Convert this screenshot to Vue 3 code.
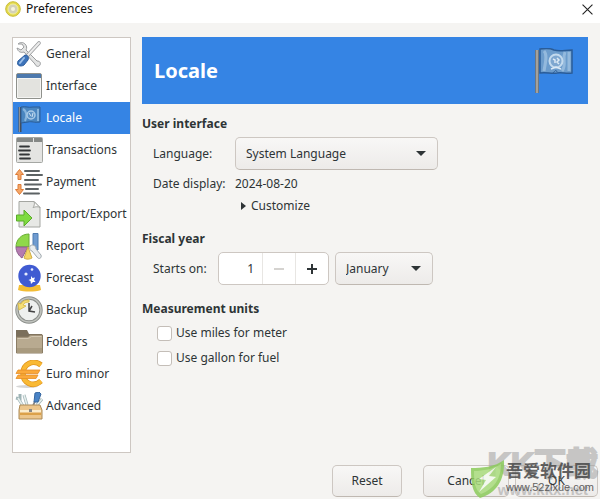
<script setup>
import { ref } from 'vue'

const pages = [
  { id: 'general', label: 'General' },
  { id: 'interface', label: 'Interface' },
  { id: 'locale', label: 'Locale' },
  { id: 'transactions', label: 'Transactions' },
  { id: 'payment', label: 'Payment' },
  { id: 'import', label: 'Import/Export' },
  { id: 'report', label: 'Report' },
  { id: 'forecast', label: 'Forecast' },
  { id: 'backup', label: 'Backup' },
  { id: 'folders', label: 'Folders' },
  { id: 'euro', label: 'Euro minor' },
  { id: 'advanced', label: 'Advanced' }
]

const months = [
  'January', 'February', 'March', 'April', 'May', 'June',
  'July', 'August', 'September', 'October', 'November', 'December'
]

const current = ref('locale')
const language = ref('System Language')
const day = ref(1)
const month = ref('January')
const miles = ref(false)
const gallon = ref(false)
</script>

<template>
  <div class="window">
    <header class="titlebar">
      <svg class="logo" viewBox="0 0 16 16">
        <circle cx="8" cy="8" r="7.3" fill="#e3d94a" stroke="#c9bd3d" />
        <circle cx="8" cy="8" r="5" fill="#d3d1b8" stroke="#f4f09a" />
        <circle cx="8" cy="8" r="2" fill="#f7f5de" />
      </svg>
      <span class="title">Preferences</span>
      <button class="close" aria-label="Close">
        <svg viewBox="0 0 10 10"><path d="M.5.5l9 9M9.5.5l-9 9" stroke="#222" fill="none" /></svg>
      </button>
    </header>

    <main class="main">
      <nav class="sidebar">
        <button
          v-for="p in pages"
          :key="p.id"
          class="item"
          :class="{ active: current === p.id }"
          @click="current = p.id"
        >
          <svg class="icon" viewBox="0 0 28 28">
            <g v-if="p.id === 'general'">
              <path d="M3 4c2-2 5-2 7 0s2 4 1 6l11 11c3 0 4 2 3 4s-4 2-5-1L9 12c-3 1-6 0-7-4l4 2 3-3-2-3z" fill="#e3e4e4" stroke="#9a9c9e" />
              <path d="M24 3L12 16" stroke="#9a9c9e" stroke-width="3.6" stroke-linecap="round" />
              <path d="M24 3L12 16" stroke="#ececec" stroke-width="2" stroke-linecap="round" />
              <path d="M10 15c3 0 4 2 3 5l-4 5c-3 2-8 1-6-4z" fill="#3d74bb" stroke="#2f5f9f" />
              <path d="M9 18l-4 5" stroke="#9cc0ea" stroke-width="2" stroke-linecap="round" />
            </g>
            <g v-else-if="p.id === 'interface'">
              <rect x="1.5" y="1.5" width="25" height="25" rx="1.5" fill="#e3e3df" stroke="#8f918c" />
              <path d="M2 2h24v4H2z" fill="#4d79ad" />
              <path d="M2.5 6.5h23v19h-23z" fill="none" stroke="#f4f4f2" />
            </g>
            <g v-else-if="p.id === 'locale'">
              <path d="M5 3v25" stroke="#454e5c" stroke-width="3" />
              <path d="M4.500 3v25" stroke="#8d8f90" />
              <path d="M6 3c5-1 7 1 12 0h7v15c-6 1-8-1-12 0l-7 1z" fill="#4a86c0" stroke="#2b5d97" />
              <path d="M8 5c4 2 4 8 2 12M23 5v12" stroke="#86b4dd" stroke-width="2" fill="none" />
              <circle cx="16" cy="11" r="4" fill="#5c92c6" stroke="#a9cae6" stroke-width="1.5" />
              <path d="M14 9l2 3M18 9l-1 4" stroke="#cfe3f3" />
            </g>
            <g v-else-if="p.id === 'transactions'">
              <rect x="1.5" y="1.5" width="26" height="25" rx="1" fill="#e4e4e2" stroke="#a5a7a3" />
              <path d="M2 2h16v4H2zM19 2h8v4h-8z" fill="#858886" />
              <path d="M5 10.5h9M4 14.500h11M5 18.500h9M5 22.500h10" stroke="#333638" stroke-width="1.8" stroke-linecap="round" />
            </g>
            <g v-else-if="p.id === 'payment'">
              <path d="M4.500 1.500l4 5H6v5H3v-5H.5zM4.500 26.500l4-5H6v-5H3v5H.5z" fill="#f5a768" stroke="#dd7c39" />
              <path d="M10 3h14M12 7h15M10 12h13M10 16.500h16M11 21h12M9 25.500h15" stroke="#5c6264" stroke-width="2" stroke-linecap="round" />
            </g>
            <g v-else-if="p.id === 'import'">
              <path d="M4 1.500h15l6 6V27H4z" fill="#e7e8e5" stroke="#a4a6a1" />
              <path d="M19 1.500c1 2 0 5-1 6 3-1 5-1 7 0z" fill="#fafaf8" stroke="#a4a6a1" />
              <path d="M1.500 15H9v-5l8 8-8 8v-5H1.500z" fill="#7fdb40" stroke="#5cab2c" />
            </g>
            <g v-else-if="p.id === 'report'">
              <path d="M14 15V2C6 2 1 8 1 15z" fill="#8fd84a" stroke="#69ac35" />
              <path d="M13 15H1c0 5 3 9 6 11z" fill="#b57bb0" stroke="#8b5f8b" />
              <path d="M13 15L9 26c3 2 6 1 8 0z" fill="#f4d566" stroke="#cfac45" />
              <path d="M18 1.500h5V18h-5z" fill="#6f9bd0" stroke="#4f7cb2" />
              <path d="M15 14c2-2 6-1 6 3l5 6c1 3-2 5-4 2l-5-6c-2 0-3-3-2-5z" fill="#eaedef" stroke="#a1a9ae" />
            </g>
            <g v-else-if="p.id === 'forecast'">
              <path d="M4 21h21l1 5c-6 2-17 2-23 0z" fill="#f3bd35" />
              <circle cx="14.500" cy="12" r="11.200" fill="#405bd2" />
              <path d="M16 12l1.500 2 2.500-.5-1 2.500 1.500 2H18l-2 2-.5-3-2-1 2.500-1z" fill="#fff" />
              <circle cx="11" cy="10" r="1.600" fill="#e7ecff" />
              <circle cx="17" cy="5.500" r="1.300" fill="#e7ecff" />
            </g>
            <g v-else-if="p.id === 'backup'">
              <circle cx="14" cy="14" r="12" fill="#eef0ee" stroke="#8a8d89" stroke-width="3.400" />
              <circle cx="14" cy="14" r="12" fill="none" stroke="#c0c3be" stroke-width="1.600" />
              <path d="M14 7v8l6 1M14 15l3-5" stroke="#444" stroke-width="1.500" fill="none" />
              <path d="M14 4c-4 0-7 1-8 4L3 7l1 7 7-4-3-1c1-2 3-3 6-3z" fill="#f5de76" stroke="#dcc050" />
            </g>
            <g v-else-if="p.id === 'folders'">
              <path d="M1 2h11l2 4h13v19H1z" fill="#7b6f5b" />
              <path d="M1.500 9h11l3-2h12v18h-26z" fill="#b8aa90" stroke="#8b7d65" />
              <path d="M2.500 10.500h11l3-2h10" stroke="#d2c6b0" fill="none" />
              <path d="M2 20h25v5H2z" fill="#a89a7f" />
            </g>
            <g v-else-if="p.id === 'euro'">
              <ellipse cx="12" cy="26.500" rx="11" ry="1.500" fill="#d6d6d6" />
              <path d="M26 5C18-1 8 4 8 13.500S18 28 26 21" fill="none" stroke="#e0951f" stroke-width="5.500" />
              <path d="M26 5C18-1 8 4 8 13.500S18 28 26 21" fill="none" stroke="#f9b934" stroke-width="4" />
              <path d="M3 10h22l-2 3.500H1zM3 15h20l-2 3.500H1z" fill="#fba93a" stroke="#e58e28" stroke-width=".8" />
            </g>
            <g v-else>
              <path d="M8 14L3 6M5 2v5l-4-1M12 13L9 3M22 13l5-6" stroke="#9fb4b6" stroke-width="3" fill="none" />
              <path d="M8 14L3 6M12 13L9 3M22 13l5-6" stroke="#e6eeec" stroke-width="1.600" />
              <path d="M18 14l2-5" stroke="#888" stroke-width="2" />
              <path d="M20 1l4-1 2 2-3 8h-4z" fill="#4983c6" stroke="#35669f" />
              <path d="M5 13h20l2 5v9H4v-9z" fill="#ecc68c" stroke="#ac8a57" />
              <path d="M5 18h21v2H5z" fill="#fbedce" />
              <path d="M5 21h21v2H5z" fill="#dba14a" />
              <path d="M14 17h3v3h-3z" fill="#888" />
            </g>
          </svg>
          <span>{{ p.label }}</span>
        </button>
      </nav>

      <section class="content">
        <div class="banner">
          <h1>Locale</h1>
          <svg class="flag" viewBox="0 0 40 46">
            <path d="M3 2v43" stroke="#6f777e" stroke-width="4" />
            <path d="M3 2v43" stroke="#a3a19c" stroke-width="2" />
            <path d="M6 1c6-1 10-1 14 1 6 2 11 0 18 0v23c-6 1-10-1-15 0-6 1-10-1-17 0z" fill="#6c9ccc" stroke="#2a5c98" stroke-width="1.500" />
            <path d="M10 3c4 4 1 13 0 20M31 4c-3 7 2 13-3 19M35 4v19" stroke="#a9c9e6" stroke-width="3" opacity=".65" fill="none" />
            <circle cx="22" cy="13" r="6.500" fill="#7ea7d0" stroke="#c3daee" stroke-width="2" />
            <path d="M19 11l2 1v3M23 10l2 2-2 2 2 2M17 21l5-2 5 2" stroke="#dbe9f5" stroke-width="1.500" fill="none" />
            <path d="M19 25c2-2 3-4 4-1" stroke="#2a5c98" fill="none" />
          </svg>
        </div>

        <section class="group">
          <h2>User interface</h2>
          <div class="row">
            <label class="name" for="language">Language:</label>
            <div class="combo wide">
              <select id="language" v-model="language">
                <option>System Language</option>
                <option>English</option>
              </select>
              <svg class="arrow" viewBox="0 0 10 5"><path d="M0 0h10L5 5z" fill="#2e3436" /></svg>
            </div>
          </div>
          <div class="row date">
            <span class="name">Date display:</span>
            <span>2024-08-20</span>
          </div>
          <button class="expander">
            <svg viewBox="0 0 5 8"><path d="M0 0l5 4-5 4z" fill="#2e3436" /></svg>
            Customize
          </button>
        </section>

        <section class="group">
          <h2>Fiscal year</h2>
          <div class="row">
            <label class="name short" for="day">Starts on:</label>
            <div class="spin">
              <input id="day" v-model.number="day" type="text" inputmode="numeric" />
              <button aria-label="Decrease" :disabled="day <= 1" @click="day--">
                <svg viewBox="0 0 10 10"><path d="M0 5h10" stroke="currentColor" stroke-width="2" /></svg>
              </button>
              <button aria-label="Increase" @click="day++">
                <svg viewBox="0 0 10 10"><path d="M0 5h10M5 0v10" stroke="currentColor" stroke-width="2" /></svg>
              </button>
            </div>
            <div class="combo">
              <select v-model="month" aria-label="Month">
                <option v-for="m in months" :key="m">{{ m }}</option>
              </select>
              <svg class="arrow" viewBox="0 0 10 5"><path d="M0 0h10L5 5z" fill="#2e3436" /></svg>
            </div>
          </div>
        </section>

        <section class="group">
          <h2>Measurement units</h2>
          <label class="check"><input v-model="miles" type="checkbox" />Use miles for meter</label>
          <label class="check"><input v-model="gallon" type="checkbox" />Use gallon for fuel</label>
        </section>
      </section>
    </main>

    <footer class="actions">
      <button class="btn reset">Reset</button>
      <button class="btn cancel">Cancel</button>
      <button class="btn ok">OK</button>
    </footer>

    <div class="stamp back">
      <span class="stamp-name">KK下载</span>
      <span class="stamp-url">www.kkx.net</span>
    </div>
    <div class="stamp front">
      <svg class="shield" viewBox="0 0 34 38">
        <path d="M33 0C24 7 11 8 0 8c0 14 1 25 9 30C25 33 34 21 33 0z" fill="#8ccb5b" />
        <path d="M30 4C22 9 12 11 3 11c0 11 1 19 7 23C23 29 30 19 30 4z" fill="#a9dc7d" />
        <path d="M25 7L8 19l7 1-7 12 17-15-7-1z" fill="#f4faef" />
      </svg>
      <div class="stamp-text">
        <span class="site">吾爱软件园</span>
        <span class="address">www.52zixue.com</span>
      </div>
    </div>
  </div>
</template>

<style>
body {
  margin: 0;
  background: #f5f4f2;
}
</style>

<style scoped>
.window {
  position: relative;
  display: flex;
  flex-direction: column;
  min-height: 100vh;
  box-sizing: border-box;
  padding-bottom: 2px;
  overflow: hidden;
  background: #f5f4f2;
  color: #2e3436;
  font: 12px/18px "Noto Sans", "Open Sans", sans-serif;
}

button,
input,
select {
  margin: 0;
  font: inherit;
  color: inherit;
  box-sizing: border-box;
}

.titlebar {
  display: flex;
  align-items: center;
  height: 23px;
  padding: 0 7px 5px 5px;
  box-sizing: border-box;
  background: #fff;
  color: #111;
}

.logo {
  width: 16px;
  height: 16px;
  margin-right: 5px;
}

.title {
  flex: 1;
}

.close {
  display: flex;
  padding: 0;
  border: 0;
  background: none;
}

.close svg {
  width: 11px;
  height: 11px;
}

.main {
  flex: 1;
  display: flex;
  gap: 11px;
  padding: 14px 12px 12px;
}

.sidebar {
  flex: 0 0 119px;
  box-sizing: border-box;
  border: 1px solid #cdc7c2;
  background: #fff;
}

.item {
  display: flex;
  align-items: center;
  gap: 3px;
  width: 100%;
  height: 32px;
  padding: 0 2px;
  border: 0;
  background: none;
  text-align: left;
  white-space: nowrap;
}

.item.active {
  background: #3584e4;
  color: #fff;
}

.icon {
  flex: none;
  width: 28px;
  height: 28px;
}

.content {
  flex: 1;
  min-width: 0;
}

.banner {
  display: flex;
  align-items: center;
  justify-content: space-between;
  height: 67px;
  padding: 0 14px 0 12px;
  margin-bottom: 11px;
  background: #3584e4;
  color: #fff;
}

h1 {
  margin: 0;
  font-size: 20px;
  line-height: 28px;
}

.flag {
  width: 40px;
  height: 46px;
}

.group {
  margin-bottom: 15px;
}

h2 {
  margin: 0 0 4px;
  font-size: 12px;
  line-height: 18px;
}

.row {
  display: flex;
  align-items: center;
  padding-left: 11px;
}

.name {
  width: 82px;
}

.name.short {
  width: 65px;
}

.date {
  margin: 5px 0 4px;
}

.combo {
  position: relative;
  width: 98px;
}

.combo.wide {
  width: 203px;
}

.combo select {
  width: 100%;
  height: 33px;
  padding: 0 28px 0 10px;
  appearance: none;
}

.combo select,
.btn {
  border: 1px solid #cdc7c2;
  border-bottom-color: #bfb8b1;
  border-radius: 5px;
  background: linear-gradient(#f8f7f6, #edebe9);
}

.arrow {
  position: absolute;
  top: 14px;
  right: 12px;
  width: 10px;
  height: 5px;
  pointer-events: none;
}

.expander {
  display: flex;
  align-items: center;
  gap: 5px;
  padding: 0;
  margin-left: 99px;
  border: 0;
  background: none;
}

.expander svg {
  width: 5px;
  height: 8px;
}

.spin {
  display: flex;
  width: 111px;
  height: 33px;
  margin-right: 6px;
  box-sizing: border-box;
  border: 1px solid #cdc7c2;
  border-radius: 5px;
  background: #fff;
  overflow: hidden;
}

.spin input {
  flex: 1;
  min-width: 0;
  padding: 0 8px;
  border: 0;
  background: none;
  text-align: right;
}

.spin button {
  display: flex;
  align-items: center;
  justify-content: center;
  width: 33px;
  padding: 0;
  border: 0;
  border-left: 1px solid #e8e6e3;
  background: none;
}

.spin button:disabled {
  color: #d5d3d0;
}

.spin svg {
  width: 10px;
  height: 10px;
}

.check {
  display: flex;
  align-items: center;
  gap: 4px;
  margin: 6px 0 7px 15px;
}

.check input {
  width: 15px;
  height: 15px;
  appearance: none;
  border: 1px solid #c4beb8;
  border-radius: 3px;
  background: #fff;
}

.check input:checked {
  background: #3584e4;
}

.actions {
  display: flex;
  justify-content: flex-end;
  padding-right: 2px;
}

.btn {
  height: 32px;
  padding: 0;
}

.reset {
  width: 70px;
  margin-right: 21px;
}

.cancel {
  width: 86px;
  margin-right: 6px;
}

.ok {
  width: 83px;
}

/* download site stamps lying over the lower right corner */
.stamp {
  position: absolute;
  display: flex;
  pointer-events: none;
  white-space: nowrap;
}

.back {
  right: 2px;
  bottom: 0;
  flex-direction: column;
  align-items: center;
  color: #a0a0a0;
  opacity: 0.55;
}

.stamp-name {
  font: bold 32px/34px "Liberation Sans", "Noto Sans CJK SC", sans-serif;
  -webkit-text-stroke: 2px #a0a0a0;
}

.stamp-url {
  font: bold 15px/18px "Liberation Sans", sans-serif;
}

.front {
  right: 6px;
  bottom: 1px;
  gap: 1px;
  opacity: 0.85;
}

.shield {
  width: 34px;
  height: 38px;
}

.stamp-text {
  display: flex;
  flex-direction: column;
  color: #484848;
}

.site {
  font: bold 17px/20px "Noto Sans CJK SC", sans-serif;
}

.address {
  font: 11px/14px "Liberation Sans", sans-serif;
}
</style>
